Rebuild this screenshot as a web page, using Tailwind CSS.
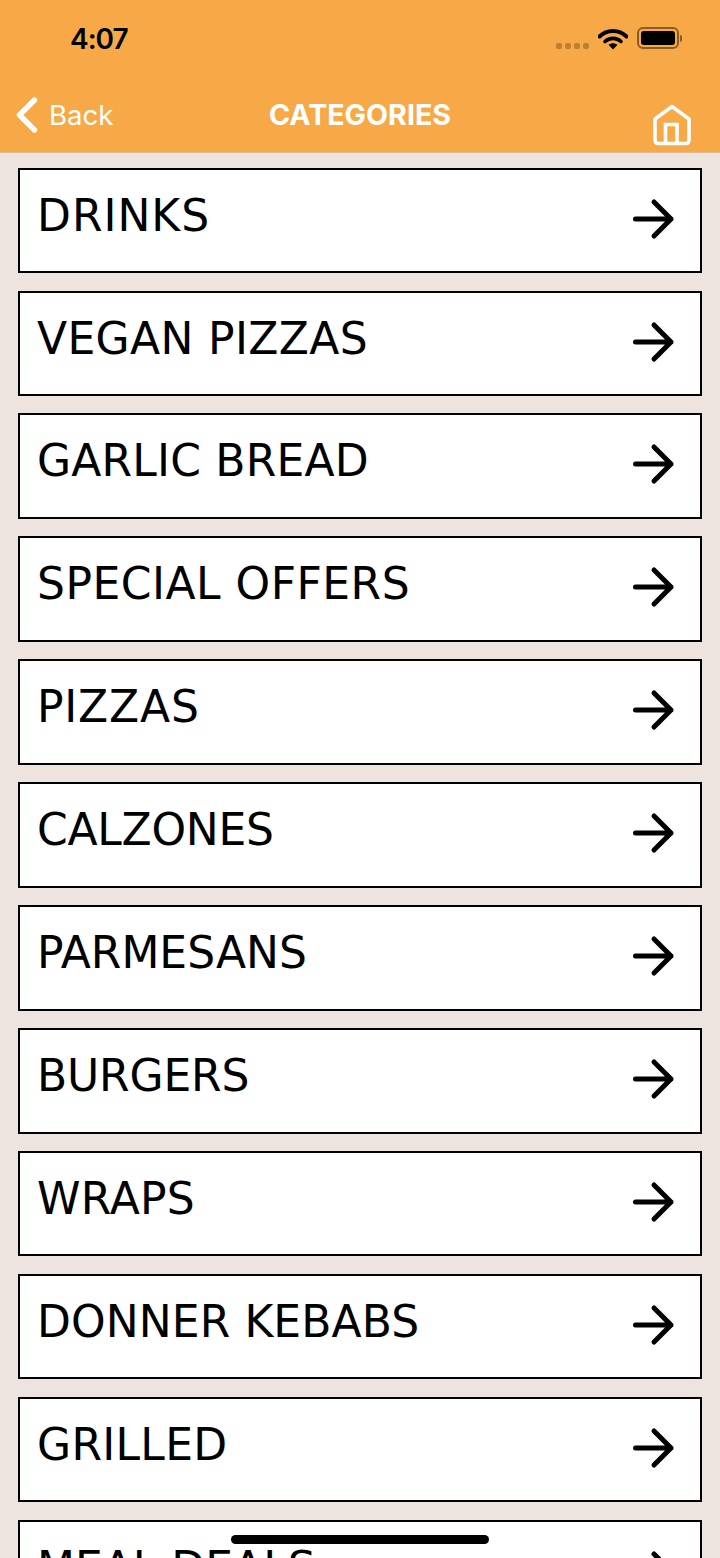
<!DOCTYPE html>
<html lang="en">
<head>
    <meta charset="UTF-8">
    <meta name="viewport" content="width=device-width, initial-scale=1.0">
    <script src="https://cdn.jsdelivr.net/npm/@tailwindcss/browser@4"></script>
    <title>Categories</title>
</head>
<body class="bg-[#ede4df]">
<div class="relative h-[1558px] w-[720px] overflow-hidden font-['Liberation_Sans',sans-serif]">

    <!-- header -->
    <div class="h-[153px] bg-[#f8a947] border-b border-[#dcb98f]">
        <div class="flex h-[78px] items-start justify-between">
            <span class="ml-[70px] mt-[21px] text-[28px] leading-[36px] font-semibold text-black font-['Inter',sans-serif] tracking-[-1px]">4:07</span>
            <div class="mr-[38px] mt-[27px] flex items-start">
                <div class="mt-[16px] flex gap-[3px]">
                    <span class="h-[6px] w-[6px] rounded-[2px] bg-black/25"></span>
                    <span class="h-[6px] w-[6px] rounded-[2px] bg-black/25"></span>
                    <span class="h-[6px] w-[6px] rounded-[2px] bg-black/25"></span>
                    <span class="h-[6px] w-[6px] rounded-[2px] bg-black/25"></span>
                </div>
                <svg class="ml-[9px] mt-[1px]" width="30" height="22" viewBox="0 0 30 22">
                    <path d="M1.5 8.5 C9 1 21 1 28.5 8.5" fill="none" stroke="#000" stroke-width="4" stroke-linecap="round"/>
                    <path d="M7 13.5 C11.5 9.3 18.5 9.3 23 13.5" fill="none" stroke="#000" stroke-width="3.6" stroke-linecap="round"/>
                    <path d="M10.5 16.8 C13 14.6 17 14.6 19.5 16.8 L15 21.5 Z" fill="#000"/>
                </svg>
                <div class="ml-[9px] flex items-center">
                    <div class="h-[22px] w-[42px] rounded-[6px] border-2 border-black/45 p-[2px]">
                        <div class="h-full w-full rounded-[3px] bg-black"></div>
                    </div>
                    <span class="ml-[1px] h-[7px] w-[2px] rounded-r-[2px] bg-black/45"></span>
                </div>
            </div>
        </div>
        <div class="relative flex h-[74px] items-start justify-center">
            <div class="absolute left-[16px] top-[18px] flex items-center">
                <svg width="22" height="36" viewBox="0 0 22 36">
                    <path d="M18.5 3 L3.5 18 L18.5 33" fill="none" stroke="#fff" stroke-width="5.4" stroke-linecap="round" stroke-linejoin="round"/>
                </svg>
                <span class="ml-[11px] mt-[1px] text-[27.6px] leading-[36px] text-white font-['Inter',sans-serif]">Back</span>
            </div>
            <span class="mt-[19px] text-[28.6px] leading-[36px] font-bold text-white font-['Inter',sans-serif]">CATEGORIES</span>
            <svg class="absolute left-[653px] top-[26px]" width="38" height="42" viewBox="0 0 38 42">
                <path d="M19 2.5 L36 15 V36 Q36 39.5 32.5 39.5 H5.5 Q2 39.5 2 36 V15 Z" fill="none" stroke="#fff" stroke-width="3.6" stroke-linejoin="round"/>
                <path d="M12.5 39 V20.5 H24 V39" fill="none" stroke="#fff" stroke-width="3.6"/>
            </svg>
        </div>
    </div>

    <!-- category list -->
    <div class="flex flex-col gap-[17.55px] pl-[18px] pr-[18px] pt-[14.6px]">
        <a class="flex h-[105.4px] items-start justify-between border-2 border-black bg-white pl-[17px] pr-[25px]" href="#">
            <span class="mt-[19px] text-[44px] leading-[54px] tracking-[1px] text-black font-['DejaVu_Sans',sans-serif]">DRINKS</span>
            <svg class="mt-[27px]" width="44" height="44" viewBox="0 0 44 44"><path d="M4.5 22 H40 M23 5 L40 22 L23 39" fill="none" stroke="#000" stroke-width="5" stroke-linecap="round" stroke-linejoin="round"/></svg>
        </a>
        <a class="flex h-[105.4px] items-start justify-between border-2 border-black bg-white pl-[17px] pr-[25px]" href="#">
            <span class="mt-[19px] text-[44px] leading-[54px] tracking-[0.35px] text-black font-['DejaVu_Sans',sans-serif]">VEGAN PIZZAS</span>
            <svg class="mt-[27px]" width="44" height="44" viewBox="0 0 44 44"><path d="M4.5 22 H40 M23 5 L40 22 L23 39" fill="none" stroke="#000" stroke-width="5" stroke-linecap="round" stroke-linejoin="round"/></svg>
        </a>
        <a class="flex h-[105.4px] items-start justify-between border-2 border-black bg-white pl-[17px] pr-[25px]" href="#">
            <span class="mt-[19px] text-[44px] leading-[54px] tracking-[0.2px] text-black font-['DejaVu_Sans',sans-serif]">GARLIC BREAD</span>
            <svg class="mt-[27px]" width="44" height="44" viewBox="0 0 44 44"><path d="M4.5 22 H40 M23 5 L40 22 L23 39" fill="none" stroke="#000" stroke-width="5" stroke-linecap="round" stroke-linejoin="round"/></svg>
        </a>
        <a class="flex h-[105.4px] items-start justify-between border-2 border-black bg-white pl-[17px] pr-[25px]" href="#">
            <span class="mt-[19px] text-[44px] leading-[54px] tracking-[0.5px] text-black font-['DejaVu_Sans',sans-serif]">SPECIAL OFFERS</span>
            <svg class="mt-[27px]" width="44" height="44" viewBox="0 0 44 44"><path d="M4.5 22 H40 M23 5 L40 22 L23 39" fill="none" stroke="#000" stroke-width="5" stroke-linecap="round" stroke-linejoin="round"/></svg>
        </a>
        <a class="flex h-[105.4px] items-start justify-between border-2 border-black bg-white pl-[17px] pr-[25px]" href="#">
            <span class="mt-[19px] text-[44px] leading-[54px] tracking-[0.8px] text-black font-['DejaVu_Sans',sans-serif]">PIZZAS</span>
            <svg class="mt-[27px]" width="44" height="44" viewBox="0 0 44 44"><path d="M4.5 22 H40 M23 5 L40 22 L23 39" fill="none" stroke="#000" stroke-width="5" stroke-linecap="round" stroke-linejoin="round"/></svg>
        </a>
        <a class="flex h-[105.4px] items-start justify-between border-2 border-black bg-white pl-[17px] pr-[25px]" href="#">
            <span class="mt-[19px] text-[44px] leading-[54px] tracking-[-0.25px] text-black font-['DejaVu_Sans',sans-serif]">CALZONES</span>
            <svg class="mt-[27px]" width="44" height="44" viewBox="0 0 44 44"><path d="M4.5 22 H40 M23 5 L40 22 L23 39" fill="none" stroke="#000" stroke-width="5" stroke-linecap="round" stroke-linejoin="round"/></svg>
        </a>
        <a class="flex h-[105.4px] items-start justify-between border-2 border-black bg-white pl-[17px] pr-[25px]" href="#">
            <span class="mt-[19px] text-[44px] leading-[54px] text-black font-['DejaVu_Sans',sans-serif]">PARMESANS</span>
            <svg class="mt-[27px]" width="44" height="44" viewBox="0 0 44 44"><path d="M4.5 22 H40 M23 5 L40 22 L23 39" fill="none" stroke="#000" stroke-width="5" stroke-linecap="round" stroke-linejoin="round"/></svg>
        </a>
        <a class="flex h-[105.4px] items-start justify-between border-2 border-black bg-white pl-[17px] pr-[25px]" href="#">
            <span class="mt-[19px] text-[44px] leading-[54px] tracking-[-0.15px] text-black font-['DejaVu_Sans',sans-serif]">BURGERS</span>
            <svg class="mt-[27px]" width="44" height="44" viewBox="0 0 44 44"><path d="M4.5 22 H40 M23 5 L40 22 L23 39" fill="none" stroke="#000" stroke-width="5" stroke-linecap="round" stroke-linejoin="round"/></svg>
        </a>
        <a class="flex h-[105.4px] items-start justify-between border-2 border-black bg-white pl-[17px] pr-[25px]" href="#">
            <span class="mt-[19px] text-[44px] leading-[54px] tracking-[0.2px] text-black font-['DejaVu_Sans',sans-serif]">WRAPS</span>
            <svg class="mt-[27px]" width="44" height="44" viewBox="0 0 44 44"><path d="M4.5 22 H40 M23 5 L40 22 L23 39" fill="none" stroke="#000" stroke-width="5" stroke-linecap="round" stroke-linejoin="round"/></svg>
        </a>
        <a class="flex h-[105.4px] items-start justify-between border-2 border-black bg-white pl-[17px] pr-[25px]" href="#">
            <span class="mt-[19px] text-[44px] leading-[54px] tracking-[0.1px] text-black font-['DejaVu_Sans',sans-serif]">DONNER KEBABS</span>
            <svg class="mt-[27px]" width="44" height="44" viewBox="0 0 44 44"><path d="M4.5 22 H40 M23 5 L40 22 L23 39" fill="none" stroke="#000" stroke-width="5" stroke-linecap="round" stroke-linejoin="round"/></svg>
        </a>
        <a class="flex h-[105.4px] items-start justify-between border-2 border-black bg-white pl-[17px] pr-[25px]" href="#">
            <span class="mt-[19px] text-[44px] leading-[54px] tracking-[0.3px] text-black font-['DejaVu_Sans',sans-serif]">GRILLED</span>
            <svg class="mt-[27px]" width="44" height="44" viewBox="0 0 44 44"><path d="M4.5 22 H40 M23 5 L40 22 L23 39" fill="none" stroke="#000" stroke-width="5" stroke-linecap="round" stroke-linejoin="round"/></svg>
        </a>
        <a class="flex h-[105.4px] items-start justify-between border-2 border-black bg-white pl-[17px] pr-[25px]" href="#">
            <span class="mt-[19px] text-[44px] leading-[54px] text-black font-['DejaVu_Sans',sans-serif]">MEAL DEALS</span>
            <svg class="mt-[27px]" width="44" height="44" viewBox="0 0 44 44"><path d="M4.5 22 H40 M23 5 L40 22 L23 39" fill="none" stroke="#000" stroke-width="5" stroke-linecap="round" stroke-linejoin="round"/></svg>
        </a>
    </div>

    <!-- home indicator -->
    <div class="absolute bottom-[14px] left-[231px] h-[9px] w-[258px] rounded-full bg-black"></div>
</div>
</body>
</html>
